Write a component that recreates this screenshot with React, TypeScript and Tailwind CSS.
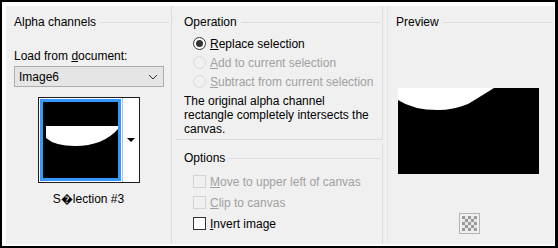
import React from 'react';

const font = { fontFamily: '"Liberation Sans", Arial, sans-serif' };

const GroupTitle: React.FC<{ title: string }> = ({ title }) => (
  <div className="flex items-center h-[16px]">
    <span className="pl-[8px] pr-[4px] text-black leading-none">{title}</span>
    <div className="flex-1 h-px bg-[#dcdcdc] mr-[2px]" />
  </div>
);

const Radio: React.FC<{ checked?: boolean; disabled?: boolean; children: React.ReactNode }> = ({ checked, disabled, children }) => (
  <div className={`flex items-center h-[19px] ${disabled ? 'text-[#a0a0a0]' : 'text-black'}`}>
    <span
      className={`w-[13px] h-[13px] rounded-full border flex items-center justify-center mr-[4px] ${
        disabled ? 'border-[#d8d8d8] bg-[#f0f0f0]' : 'border-[#333333] bg-white'
      }`}
    >
      {checked && <span className="w-[7px] h-[7px] rounded-full bg-[#333333]" />}
    </span>
    <span>{children}</span>
  </div>
);

const Check: React.FC<{ disabled?: boolean; children: React.ReactNode }> = ({ disabled, children }) => (
  <div className={`flex items-center h-[21px] ${disabled ? 'text-[#a0a0a0]' : 'text-black'}`}>
    <span
      className={`w-[13px] h-[13px] border mr-[4px] ${
        disabled ? 'border-[#d4d4d4] bg-[#f0f0f0]' : 'border-[#333333] bg-white'
      }`}
    />
    <span>{children}</span>
  </div>
);

export default function App() {
  return (
    <div className="w-[558px] h-[248px] bg-black pt-[2px] pl-[2px] pr-[3px] pb-[2px] text-[12px]" style={font}>
      <div className="w-full h-full bg-white pt-[4px] pl-[4px] pr-[1px] pb-[2px]">
        <div className="w-full h-full bg-[#f0f0f0] flex gap-[4px]">
          {/* Alpha channels */}
          <div className="w-[166px] h-full border-r border-[#dcdcdc] pt-[8px]">
            <GroupTitle title="Alpha channels" />
            <div className="pl-[8px] pr-[7px] pt-[18px]">
              <div className="h-[16px] leading-[16px]">
                Load from <span className="underline">d</span>ocument:
              </div>
              <div className="mt-[2px] h-[21px] w-[150px] border border-[#adadad] bg-[#e5e5e5] flex items-center justify-between pl-[4px] pr-[5px]">
                <span>Image6</span>
                <svg width="10" height="6" viewBox="0 0 10 6">
                  <path d="M1 1 L5 5 L9 1" fill="none" stroke="#333" strokeWidth="1" />
                </svg>
              </div>
            </div>
            <div className="flex justify-center mt-[10px]">
              <div className="w-[102px] h-[86px] border border-[#1e1e1e] flex">
                <div className="w-[83px] h-full bg-white p-[1px]">
                  <div className="w-full h-full border-[3px] border-[#3399ff] bg-black">
                    <svg width="75" height="76" viewBox="0 0 75 76" className="block">
                      <rect width="75" height="76" fill="black" />
                      <path d="M3 24 L75 24 L75 27 Q60 44 32 44 Q12 44 3 36 Z" fill="white" />
                    </svg>
                  </div>
                </div>
                <div className="flex-1 bg-white border-l border-[#bdbdbd] flex items-center justify-center">
                  <svg width="8" height="5" viewBox="0 0 8 5">
                    <path d="M0 0 L8 0 L4 4 Z" fill="black" />
                  </svg>
                </div>
              </div>
            </div>
            <div className="text-center mt-[8px] leading-[16px]">S{'\uFFFD'}lection #3</div>
          </div>

          {/* Operation / Options */}
          <div className="w-[207px] h-full flex flex-col gap-[4px]">
            <div className="h-[134px] border-r border-b border-[#dcdcdc] pt-[8px]">
              <GroupTitle title="Operation" />
              <div className="pl-[17px] pt-[4px]">
                <Radio checked>
                  <span className="underline">R</span>eplace selection
                </Radio>
                <Radio disabled>
                  <span className="underline">A</span>dd to current selection
                </Radio>
                <Radio disabled>
                  <span className="underline">S</span>ubtract from current selection
                </Radio>
              </div>
              <div className="pl-[8px] pt-[3px] leading-[14px]">
                The original alpha channel
                <br />
                rectangle completely intersects the
                <br />
                canvas.
              </div>
            </div>
            <div className="flex-1 border-r border-[#dcdcdc] pt-[6px]">
              <GroupTitle title="Options" />
              <div className="pl-[17px] pt-[5px]">
                <Check disabled>
                  <span className="underline">M</span>ove to upper left of canvas
                </Check>
                <Check disabled>
                  <span className="underline">C</span>lip to canvas
                </Check>
                <Check>
                  <span className="underline">I</span>nvert image
                </Check>
              </div>
            </div>
          </div>

          {/* Preview */}
          <div className="flex-1 h-full border-l border-[#e4e4e4] pt-[8px] flex flex-col">
            <GroupTitle title="Preview" />
            <div className="pl-[10px] pt-[58px]">
              <svg width="141" height="86" viewBox="0 0 141 86" className="block">
                <rect width="141" height="86" fill="black" />
                <path d="M0 0 L96 0 Q80 10 70 16 Q55 22 40 22 Q15 22 0 12 Z" fill="white" />
              </svg>
            </div>
            <div className="flex justify-center mt-[39px] pr-[4px]">
              <div className="w-[21px] h-[21px] border border-[#b4b4b4] bg-[#f0f0f0] p-[2px]">
                <svg width="15" height="15" viewBox="0 0 15 15" className="block">
                  <rect width="15" height="15" fill="#e8e8e8" />
                  {[0, 1, 2, 3, 4].flatMap((r) =>
                    [0, 1, 2, 3, 4]
                      .filter((c) => (r + c) % 2 === 0)
                      .map((c) => <rect key={`${r}-${c}`} x={c * 3} y={r * 3} width="3" height="3" fill="#9a9a9a" />)
                  )}
                </svg>
              </div>
            </div>
          </div>
        </div>
      </div>
    </div>
  );
}
